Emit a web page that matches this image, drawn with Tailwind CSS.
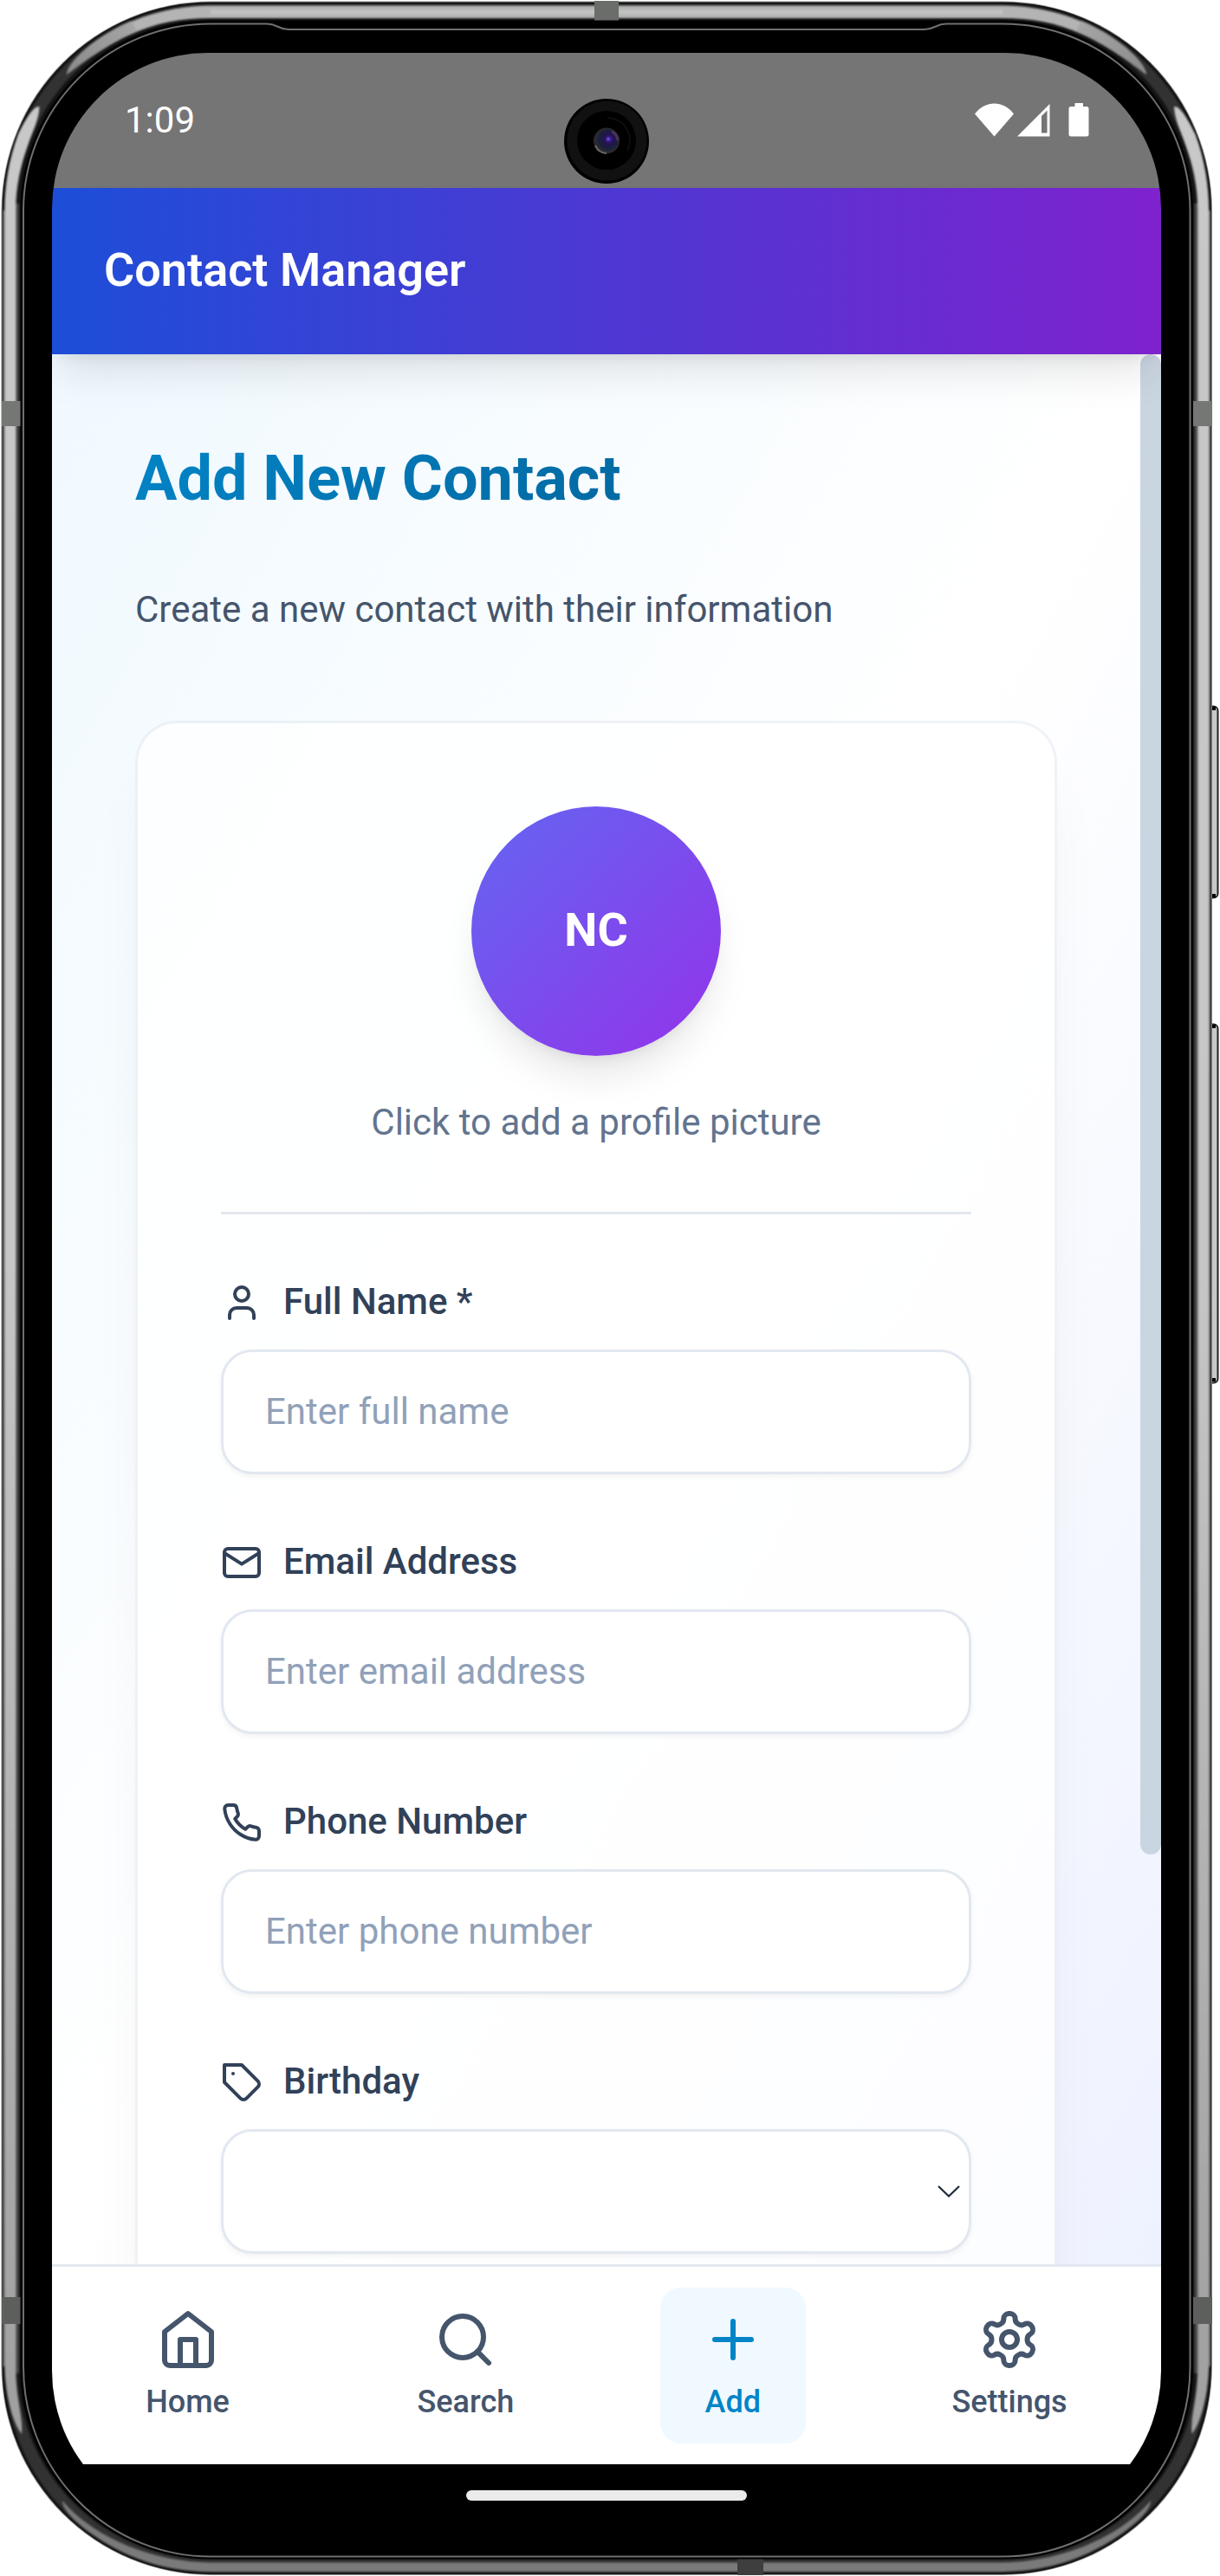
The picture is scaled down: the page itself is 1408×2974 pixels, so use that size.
<!DOCTYPE html>
<html lang="en">
<head>
<meta charset="utf-8">
<title>Contact Manager</title>
<script src="https://cdn.jsdelivr.net/npm/@tailwindcss/browser@4"></script>
</head>
<body class="bg-white">
<div class="relative w-[1408px] h-[2974px] overflow-hidden bg-white pt-[61px] pl-[60px] font-[Roboto,sans-serif]">

  <!-- Phone body -->
  <svg class="absolute inset-0" width="1408" height="2974" viewBox="0 0 1408 2974" fill="none">
    <defs>
      <linearGradient id="side" x1="0" y1="0" x2="0" y2="1">
        <stop offset="0" stop-color="#c8c8c8"/><stop offset=".5" stop-color="#c6c6c6"/><stop offset="1" stop-color="#a0a0a0"/>
      </linearGradient>
      <filter id="soft2" x="0" y="0" width="1408" height="2974" filterUnits="userSpaceOnUse"><feGaussianBlur stdDeviation="1.1"/></filter>
      <linearGradient id="fadeTL" gradientUnits="userSpaceOnUse" x1="77" y1="86" x2="200" y2="10"><stop offset="0" stop-color="#8a8a8a"/><stop offset="1" stop-color="#b4b4b4"/></linearGradient>
      <linearGradient id="fadeTR" gradientUnits="userSpaceOnUse" x1="1323" y1="86" x2="1200" y2="10"><stop offset="0" stop-color="#8a8a8a"/><stop offset="1" stop-color="#b4b4b4"/></linearGradient>
      <radialGradient id="lens" cx=".58" cy=".45" r=".6">
        <stop offset="0" stop-color="#4a2ab0"/><stop offset=".35" stop-color="#24134e"/><stop offset=".75" stop-color="#1a2238"/><stop offset="1" stop-color="#2e2c38"/>
      </radialGradient>
    </defs>
    <!-- side buttons -->
    <rect x="1392" y="815.5" width="13.5" height="221" rx="5" fill="#c8c8c8" stroke="#222" stroke-width="2"/>
    <path d="M1398 818h5M1398 1034h5" stroke="#000" stroke-width="4"/>
    <rect x="1392" y="1182.5" width="13.5" height="414" rx="5" fill="#c8c8c8" stroke="#222" stroke-width="2"/>
    <path d="M1398 1185h5M1398 1593h5" stroke="#000" stroke-width="4"/>
    <!-- body -->
    <rect x="1.5" y="1.5" width="1397.5" height="2971.5" rx="241.5" fill="#8a8a8a"/>
    <rect x="2.5" y="2.5" width="1395.5" height="2969.5" rx="240.5" fill="#141414"/>
    <rect x="12.5" y="12.5" width="1375.5" height="2949.5" rx="230.5" stroke="#303030" stroke-width="14" filter="url(#soft2)"/>
    <g filter="url(#soft2)">
      <path d="M4.5 243V2732M1396 243V2732" stroke="#666" stroke-width="2.5"/>
      <path d="M20 235V2740M1380.500 235V2740" stroke="#4a4a4a" stroke-width="4"/>
      <!-- top highlight -->
      <path d="M243 6.500H1157C1215 7 1262 27 1293 50C1310 63 1322 76 1323 86C1310 76 1280 53 1250 40C1220 26 1190 21 1157 21H243C210 21 180 26 150 40C120 53 90 76 77 86C78 76 90 63 107 50C138 27 185 7 243 6.500Z" fill="#b4b4b4"/>
      <path d="M77 86C78 76 90 63 107 50C120 40 135 31 152 24L158 36C120 53 90 76 77 86Z" fill="url(#fadeTL)"/>
      <path d="M1323 86C1322 76 1310 63 1293 50C1280 40 1265 31 1248 24L1242 36C1280 53 1310 76 1323 86Z" fill="url(#fadeTR)"/>
      <!-- side highlights -->
      <path d="M45.500 123C38 122 28 141 21 155C10 185 5.500 215 5.500 243V2732C6 2760 13 2795 25 2810C27 2790 18 2770 18 2732V243C18 215 24 190 32 168C38 150 45 138 45.500 123Z" fill="url(#side)"/>
      <path d="M1355 123C1362.500 122 1372.500 141 1379.500 155C1390.500 185 1395 215 1395 243V2732C1394.500 2760 1387.500 2795 1375.500 2810C1373.500 2790 1382.500 2770 1382.500 2732V243C1382.500 215 1376.500 190 1368.500 168C1362.500 150 1355.500 138 1355 123Z" fill="url(#side)"/>
      <!-- bottom highlight -->
      <path d="M72 2887C71 2897 90 2915 110 2928C150 2955 190 2968 243 2969H1157C1210 2968 1250 2955 1290 2928C1310 2915 1329 2897 1328 2887C1290 2932 1220 2958 1157 2958.500H243C180 2958 110 2932 72 2887Z" fill="#7a7a7a"/>
    </g>
    <path d="M243 14H1157" stroke="#c2c2c2" stroke-width="5" filter="url(#soft2)"/>
    <!-- antenna bands -->
    <path d="M686 1h28v24h-28z" fill="#6a6d6a"/>
    <path d="M2 463h23v29H2zM1375 463h24v29h-24z" fill="#747774"/>
    <path d="M2 2652h23v31H2zM1375 2652h24v31h-24z" fill="#5c5f5b"/>
    <path d="M851 2953h30v20h-30z" fill="#3e3e3e"/>
    <!-- glass -->
    <rect x="23.500" y="23.500" width="1353.500" height="2931" rx="219.500" fill="#000"/>
    <path d="M243 27.500H308C320 27.500 321 34 333 34H1067C1079 34 1080 27.500 1092 27.500H1157A216 216 0 0 1 1373.500 243V2732A216 219 0 0 1 1157 2951.500H243A216 219 0 0 1 27 2732V243A216 216 0 0 1 243 27.500Z" fill="#000" stroke="#6f6f6f" stroke-width="2"/>
  </svg>

  <!-- Screen -->
  <div class="relative w-[1280px] h-[2856px] rounded-[180px] overflow-hidden bg-black flex flex-col">

    <!-- Status bar -->
    <div class="relative h-[156px] shrink-0 bg-[#757575] flex justify-between pl-[84px] pr-[83px]">
      <span class="pt-[53px] text-[42px] leading-[50px] text-white">1:09</span>
      <svg class="mt-[58px]" width="132" height="40" viewBox="0 0 132 40" fill="#fff">
        <path d="M0 12.500C12-3.600 33-3.600 45 12.500L22.500 38.500Z"/>
        <path d="M49 38.500 86.500 1V38.500ZM77 15V34.500H83.500V8.500Z" fill-rule="evenodd"/>
        <rect x="108.500" y="4" width="23" height="34.500" rx="2.500"/><rect x="115.500" y="0" width="9.500" height="6"/>
      </svg>
      <!-- Front camera -->
      <svg class="absolute left-[591px] top-[53px]" width="98" height="98" viewBox="0 0 98 98">
        <circle cx="49" cy="49" r="49" fill="#000"/><circle cx="49.500" cy="48.500" r="46" fill="#111"/>
        <circle cx="49" cy="48" r="34" fill="#000"/>
        <path d="M50 22A26 26 0 0 1 73 60" fill="none" stroke="#0e0e10" stroke-width="2"/>
        <circle cx="49" cy="48.500" r="15" fill="#2a2a2a"/><circle cx="49.500" cy="48" r="13" fill="url(#lens)"/>
        <path d="M55 38a13 13 0 0 1 7 10" stroke="#7a4480" stroke-width="3" fill="none" opacity=".5"/>
        <path d="M36 54a15 15 0 0 0 13 9" stroke="#666" stroke-width="2" fill="none"/>
        <circle cx="51" cy="46.500" r="1.800" fill="#6a44dd"/>
      </svg>
    </div>

    <!-- App header -->
    <header class="relative z-10 h-[192px] shrink-0 flex items-center px-[60px] pb-[3px] bg-[linear-gradient(90deg,#1d4ed8,#7e22ce)] shadow-[0_30px_45px_-9px_rgba(0,0,0,0.1),0_12px_18px_-12px_rgba(0,0,0,0.1)]">
      <h1 class="text-[54px] leading-[72px] font-semibold text-white">Contact Manager</h1>
    </header>

    <!-- Content -->
    <main class="relative h-[2205px] shrink-0 overflow-hidden bg-[linear-gradient(to_bottom_right,#f0f9ff,#ffffff,#eef2ff)] pl-24 pr-[120px] pt-24">
      <h2 class="w-fit text-[72px] leading-[96px] font-bold text-transparent bg-clip-text bg-[linear-gradient(135deg,#0284c7,#0369a1)]">Add New Contact</h2>
      <p class="mt-[71px] text-[42px] leading-[63px] text-slate-600">Create a new contact with their information</p>

      <section class="mt-[97px] h-[2400px] rounded-[48px] border-[3px] border-[#e2e8f0]/50 bg-white/80 bg-clip-padding p-24 shadow-[0_60px_75px_-15px_rgba(0,0,0,0.05),0_24px_30px_-18px_rgba(0,0,0,0.05)]">
        <div class="flex flex-col items-center pb-[73px] border-b-[3px] border-[#e2e8f0]">
          <div class="size-[288px] rounded-full flex items-center justify-center pb-[2px] text-[54px] leading-[72px] font-bold text-white bg-[linear-gradient(135deg,#6366f1,#9333ea)] shadow-[0_30px_45px_-9px_rgba(0,0,0,0.1),0_12px_18px_-12px_rgba(0,0,0,0.1)]">NC</div>
          <p class="mt-[47px] text-[42px] leading-[60px] text-slate-500">Click to add a profile picture</p>
        </div>

        <div class="mt-[72px] flex flex-col gap-[72px] text-[42px] leading-[60px]">
          <div class="flex flex-col gap-6">
            <div class="flex h-[60px] items-center gap-6 font-medium text-slate-700">
              <svg class="size-12" viewBox="0 0 24 24" fill="none" stroke="currentColor" stroke-width="2" stroke-linecap="round" stroke-linejoin="round"><path d="M19 21v-2a4 4 0 0 0-4-4H9a4 4 0 0 0-4 4v2"/><circle cx="12" cy="7" r="4"/></svg>
              <span class="pb-[3px]">Full Name *</span>
            </div>
            <div class="h-36 rounded-[36px] border-[3px] border-slate-200 bg-white px-12 flex items-center text-slate-400 shadow-[0_3px_6px_rgba(0,0,0,0.05)]">Enter full name</div>
          </div>
          <div class="flex flex-col gap-6">
            <div class="flex h-[60px] items-center gap-6 font-medium text-slate-700">
              <svg class="size-12" viewBox="0 0 24 24" fill="none" stroke="currentColor" stroke-width="2" stroke-linecap="round" stroke-linejoin="round"><rect x="2" y="4" width="20" height="16" rx="2"/><path d="M22 6.500l-10 6.300L2 6.500"/></svg>
              <span class="pb-[3px]">Email Address</span>
            </div>
            <div class="h-36 rounded-[36px] border-[3px] border-slate-200 bg-white px-12 flex items-center text-slate-400 shadow-[0_3px_6px_rgba(0,0,0,0.05)]">Enter email address</div>
          </div>
          <div class="flex flex-col gap-6">
            <div class="flex h-[60px] items-center gap-6 font-medium text-slate-700">
              <svg class="size-12" viewBox="0 0 24 24" fill="none" stroke="currentColor" stroke-width="2" stroke-linecap="round" stroke-linejoin="round"><path d="M22 16.920v3a2 2 0 0 1-2.180 2 19.790 19.790 0 0 1-8.630-3.070 19.500 19.500 0 0 1-6-6 19.790 19.790 0 0 1-3.070-8.670A2 2 0 0 1 4.110 2h3a2 2 0 0 1 2 1.720 12.840 12.840 0 0 0 .7 2.810 2 2 0 0 1-.45 2.110L8.090 9.910a16 16 0 0 0 6 6l1.270-1.270a2 2 0 0 1 2.110-.45 12.840 12.840 0 0 0 2.810.7A2 2 0 0 1 22 16.920z"/></svg>
              <span class="pb-[3px]">Phone Number</span>
            </div>
            <div class="h-36 rounded-[36px] border-[3px] border-slate-200 bg-white px-12 flex items-center text-slate-400 shadow-[0_3px_6px_rgba(0,0,0,0.05)]">Enter phone number</div>
          </div>
          <div class="flex flex-col gap-6">
            <div class="flex h-[60px] items-center gap-6 font-medium text-slate-700">
              <svg class="size-12" viewBox="0 0 24 24" fill="none" stroke="currentColor" stroke-width="2" stroke-linecap="round" stroke-linejoin="round"><path d="M12 2H2v10l9.290 9.290c.94.94 2.480.94 3.420 0l6.580-6.580c.94-.94.94-2.480 0-3.420L12 2Z"/><path d="M7 7h.01"/></svg>
              <span class="pb-[3px]">Birthday</span>
            </div>
            <div class="h-36 rounded-[36px] border-[3px] border-slate-200 bg-white pl-12 pr-[10px] flex items-center justify-end shadow-[0_3px_6px_rgba(0,0,0,0.05)]">
              <svg width="26" height="14" viewBox="0 0 26 14" fill="none" stroke="#1e293b" stroke-width="2.200"><path d="M1 1 13 12.500 25 1"/></svg>
            </div>
          </div>
        </div>
      </section>

      <!-- Scrollbar thumb -->
      <div class="absolute right-0 top-0 w-6 h-[1732px] rounded-full bg-slate-300"></div>
    </main>

    <!-- Bottom navigation -->
    <nav class="relative h-[231px] shrink-0 bg-white border-t-[3px] border-slate-200 flex justify-around py-6 text-[36px] leading-[48px] font-medium text-slate-600">
      <div class="flex flex-col items-center gap-3 px-12 py-6">
        <svg class="size-[72px]" viewBox="0 0 24 24" fill="none" stroke="currentColor" stroke-width="2" stroke-linecap="round" stroke-linejoin="round"><path d="m3 9 9-7 9 7v11a2 2 0 0 1-2 2H5a2 2 0 0 1-2-2z"/><path d="M9 22V12h6v10"/></svg>
        <span>Home</span>
      </div>
      <div class="flex flex-col items-center gap-3 px-12 py-6">
        <svg class="size-[72px]" viewBox="0 0 24 24" fill="none" stroke="currentColor" stroke-width="2" stroke-linecap="round" stroke-linejoin="round"><circle cx="11" cy="11" r="8"/><path d="m21 21-4.350-4.350"/></svg>
        <span>Search</span>
      </div>
      <div class="flex flex-col items-center gap-3 px-12 py-6 rounded-3xl bg-sky-50 text-[#0284c7]">
        <svg class="size-[72px]" viewBox="0 0 24 24" fill="none" stroke="currentColor" stroke-width="2" stroke-linecap="round" stroke-linejoin="round"><path d="M12 5v14M5 12h14"/></svg>
        <span>Add</span>
      </div>
      <div class="flex flex-col items-center gap-3 px-12 py-6">
        <svg class="size-[72px]" viewBox="0 0 24 24" fill="none" stroke="currentColor" stroke-width="2" stroke-linecap="round" stroke-linejoin="round"><path d="M12.220 2h-.44a2 2 0 0 0-2 2v.18a2 2 0 0 1-1 1.730l-.43.25a2 2 0 0 1-2 0l-.15-.08a2 2 0 0 0-2.730.73l-.22.38a2 2 0 0 0 .73 2.730l.15.1a2 2 0 0 1 1 1.720v.51a2 2 0 0 1-1 1.740l-.15.09a2 2 0 0 0-.73 2.730l.22.38a2 2 0 0 0 2.730.73l.15-.08a2 2 0 0 1 2 0l.43.25a2 2 0 0 1 1 1.730V20a2 2 0 0 0 2 2h.44a2 2 0 0 0 2-2v-.18a2 2 0 0 1 1-1.730l.43-.25a2 2 0 0 1 2 0l.15.08a2 2 0 0 0 2.730-.73l.22-.39a2 2 0 0 0-.73-2.730l-.15-.08a2 2 0 0 1-1-1.740v-.5a2 2 0 0 1 1-1.740l.15-.09a2 2 0 0 0 .73-2.730l-.22-.38a2 2 0 0 0-2.730-.73l-.15.08a2 2 0 0 1-2 0l-.43-.25a2 2 0 0 1-1-1.730V4a2 2 0 0 0-2-2z"/><circle cx="12" cy="12" r="3"/></svg>
        <span>Settings</span>
      </div>
    </nav>

    <!-- Gesture bar -->
    <div class="mt-[30px] mx-auto w-[324px] h-3 shrink-0 rounded-full bg-[#ebebeb]"></div>
  </div>
</div>
</body>
</html>
